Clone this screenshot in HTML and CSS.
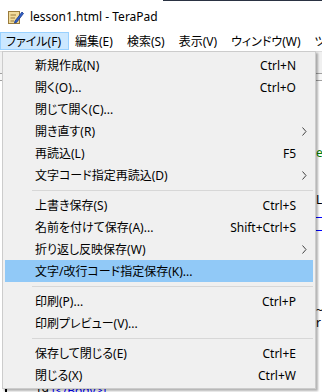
FILE: index.html
```html
<!DOCTYPE html>
<html>
<head>
    <title>lesson1.html - TeraPad</title>
    <link rel="stylesheet" href="styles.css">
</head>
<body>
    <div class="window">
        <div class="top-edge"></div>
        <div class="titlebar">
            <svg class="app-icon" width="16" height="14" viewBox="0 0 16 14">
                <rect x="0.5" y="1.5" width="11" height="12" fill="#f1dc9c" stroke="#9a7b3c"/>
                <line x1="2.5" y1="5" x2="8" y2="5" stroke="#9a7b3c"/>
                <line x1="2.5" y1="8" x2="7" y2="8" stroke="#9a7b3c"/>
                <line x1="2.5" y1="11" x2="6" y2="11" stroke="#9a7b3c"/>
                <path d="M7 11 L14 2 L15.5 3.5 L8.5 12.5 L6.5 13 Z" fill="#2f5fc8" stroke="#1b3a8a" stroke-width="0.8"/>
            </svg>
            <span class="title">lesson1.html - TeraPad</span>
        </div>

        <div class="menubar">
            <span class="menubar-item active">ファイル(F)</span>
            <span class="menubar-item">編集(E)</span>
            <span class="menubar-item">検索(S)</span>
            <span class="menubar-item">表示(V)</span>
            <span class="menubar-item">ウィンドウ(W)</span>
            <span class="menubar-item">ツール(T)</span>
        </div>

        <div class="workspace">
            <div class="toolbar"></div>
            <div class="ruler"></div>
            <div class="editor">
                <div class="snip snip-e green">e</div>
                <div class="snip snip-l">L</div>
                <div class="snip-link snip-link1"></div>
                <div class="snip-link snip-link2"></div>
                <div class="snip snip-tilde">~</div>
                <div class="snip snip-r">r</div>
                <div class="last-line"><span class="lineno">19</span> <span class="blue">[&lt;/Body&gt;]</span></div>
            </div>
        </div>

        <!-- File menu dropdown -->
        <div class="dropdown">
            <div class="menu-item"><span>新規作成(N)</span><span class="key">Ctrl+N</span><span></span></div>
            <div class="menu-item"><span>開く(O)...</span><span class="key">Ctrl+O</span><span></span></div>
            <div class="menu-item"><span>閉じて開く(C)...</span><span class="key"></span><span></span></div>
            <div class="menu-item"><span>開き直す(R)</span><span class="key"></span><span class="sub"><svg width="5" height="9" viewBox="0 0 5 9"><polyline points="0.5,0.5 4,4.5 0.5,8.5" fill="none" stroke="#404040"/></svg></span></div>
            <div class="menu-item"><span>再読込(L)</span><span class="key">F5</span><span></span></div>
            <div class="menu-item"><span>文字コード指定再読込(D)</span><span class="key"></span><span class="sub"><svg width="5" height="9" viewBox="0 0 5 9"><polyline points="0.5,0.5 4,4.5 0.5,8.5" fill="none" stroke="#404040"/></svg></span></div>
            <div class="separator"></div>
            <div class="menu-item"><span>上書き保存(S)</span><span class="key">Ctrl+S</span><span></span></div>
            <div class="menu-item"><span>名前を付けて保存(A)...</span><span class="key">Shift+Ctrl+S</span><span></span></div>
            <div class="menu-item"><span>折り返し反映保存(W)</span><span class="key"></span><span class="sub"><svg width="5" height="9" viewBox="0 0 5 9"><polyline points="0.5,0.5 4,4.5 0.5,8.5" fill="none" stroke="#404040"/></svg></span></div>
            <div class="menu-item selected"><span>文字/改行コード指定保存(K)...</span><span class="key"></span><span></span></div>
            <div class="separator"></div>
            <div class="menu-item"><span>印刷(P)...</span><span class="key">Ctrl+P</span><span></span></div>
            <div class="menu-item"><span>印刷プレビュー(V)...</span><span class="key"></span><span></span></div>
            <div class="separator"></div>
            <div class="menu-item"><span>保存して閉じる(E)</span><span class="key">Ctrl+E</span><span></span></div>
            <div class="menu-item"><span>閉じる(X)</span><span class="key">Ctrl+W</span><span></span></div>
        </div>
    </div>
</body>
</html>
```

FILE: styles.css
```css
/* Global */
body {
    margin: 0;
    padding: 0;
    background-color: #ffffff;
    font-family: "Noto Sans", "Noto Sans CJK JP", sans-serif;
    font-size: 12px;
    font-feature-settings: "palt";
    color: #000;
    overflow: hidden;
}

.window {
    position: relative;
    width: 322px;
    height: 392px;
    overflow: hidden;
    background-color: #ffffff;
}

/* thin dark edge of the window behind, along the top */
.top-edge {
    height: 1px;
    margin-left: 163px;
    background-color: #2a3242;
}

/* Title bar */
.titlebar {
    height: 31px;
    display: flex;
    align-items: center;
    padding-left: 8px;
    box-sizing: border-box;
}

.app-icon {
    margin-right: 6px;
}

.title {
    font-size: 12px;
    line-height: 16px;
}

/* Menu bar */
.menubar {
    height: 19px;
    display: flex;
    white-space: nowrap;
}

.menubar-item {
    height: 18px;
    line-height: 17px;
    padding: 0 7px 0 5px;
    border: 1px solid transparent;
    box-sizing: border-box;
}

.menubar-item.active {
    background-color: #cce8ff;
    border-color: #99d1ff;
}

/* Work area behind the menu */
.workspace {
    display: flex;
    flex-direction: column;
}

.toolbar {
    height: 21px;
    background-color: #f0f0f0;
    border-top: 1px solid #dcdcdc;
}

.ruler {
    height: 6px;
    border-top: 1px solid #a0a0a0;
    border-bottom: 1px solid #a0a0a0;
    background-color: #f7f7f7;
}

.editor {
    display: flex;
    flex-direction: column;
    font-size: 12px;
    line-height: 14px;
    white-space: nowrap;
}

.snip {
    padding-left: 316px;
}

.green {
    color: #008000;
}

.blue {
    color: #0000ff;
}

.snip-e {
    margin-top: 65px;
}

.snip-l {
    margin-top: 33px;
}

.snip-link {
    margin-left: 316px;
    width: 6px;
    height: 1px;
    background-color: #0000ff;
}

.snip-link1 {
    margin-top: 10px;
}

.snip-link2 {
    margin-top: 12px;
}

.snip-tilde {
    margin-top: 73px;
}

.snip-r {
    margin-top: -2px;
}

.last-line {
    margin-top: 54px;
    padding-left: 28px;
    border-left: 2px solid #000;
    margin-left: 5px;
}

.lineno {
    color: #000;
}

/* File menu dropdown */
.dropdown {
    position: absolute;
    left: 2px;
    top: 51px;
    width: 314px;
    box-sizing: border-box;
    background-color: #f0f0f0;
    border: 1px solid #cccccc;
    padding: 2px;
    box-shadow: 2px 2px 2px rgba(0, 0, 0, 0.3);
}

.menu-item {
    display: grid;
    grid-template-columns: 1fr auto 17px;
    align-items: center;
    height: 22px;
    padding-left: 30px;
    white-space: nowrap;
}

.menu-item.selected {
    background-color: #91c9f7;
}

.key {
    text-align: right;
}

.sub {
    display: flex;
    justify-content: flex-end;
    padding-right: 6px;
}

.separator {
    height: 8px;
    margin-left: 27px;
    display: flex;
    align-items: center;
}

.separator::after {
    content: "";
    flex: 1;
    height: 1px;
    background-color: #d7d7d7;
}
```
